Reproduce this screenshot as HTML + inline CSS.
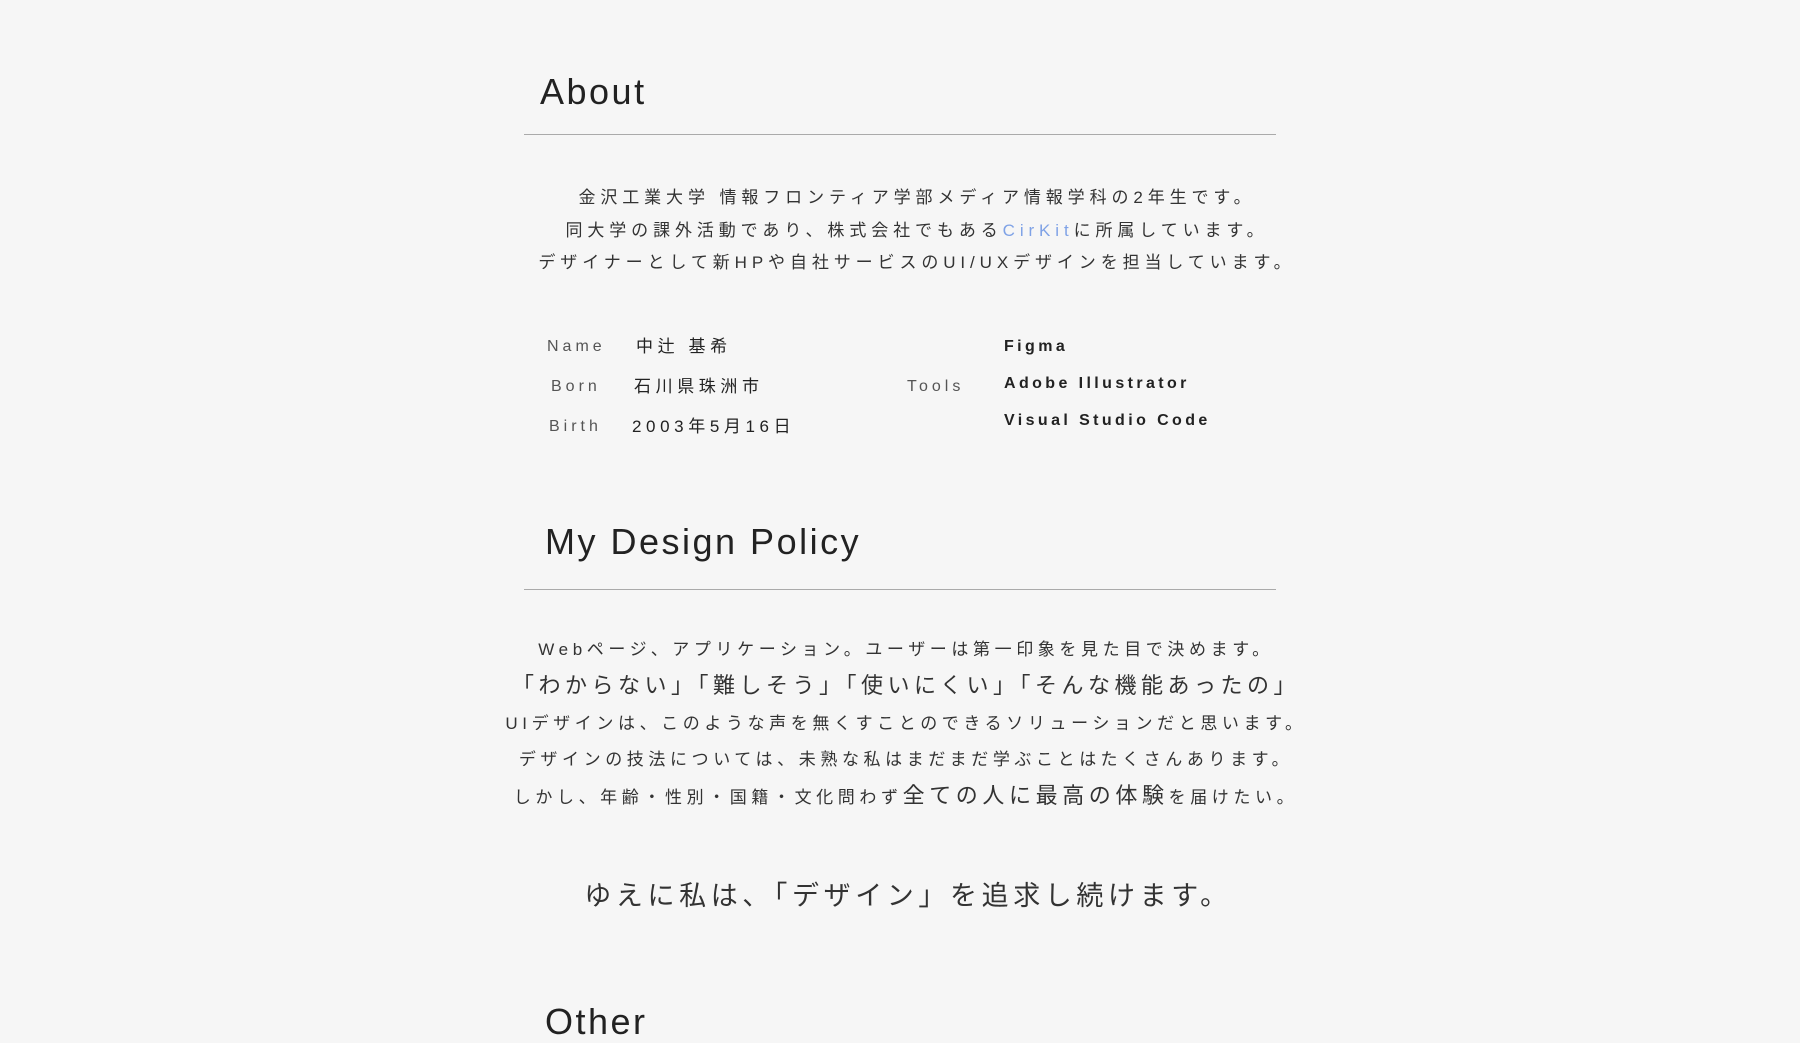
<!DOCTYPE html>
<html><head><meta charset="utf-8"><style>
html,body{margin:0;padding:0;background:#f6f6f6;}
body{width:1800px;height:1039px;position:relative;overflow:hidden;font-family:"Liberation Sans","Noto Sans CJK JP",sans-serif;color:#333;}
.a{position:absolute;white-space:nowrap;}
.h{font-size:36px;letter-spacing:2.5px;color:#222;font-weight:300;}
.line{position:absolute;left:524px;width:752px;height:1px;background:#aaa;}
.c{position:absolute;left:0;width:1800px;text-align:center;white-space:nowrap;font-size:17px;letter-spacing:4.6px;line-height:1;}
.ab{left:17px;letter-spacing:4.9px;}
.po{left:6px;}
.lab{font-size:16px;letter-spacing:4px;color:#555;}
.val{font-size:17px;letter-spacing:4.6px;color:#222;}
.tool{font-size:16px;letter-spacing:3.4px;font-weight:bold;color:#222;}
</style></head><body>
<div class="a h" style="left:540px;top:71px;">About</div>
<div class="line" style="top:134px;"></div>
<div class="c ab" style="top:189px;">金沢工業大学 情報フロンティア学部メディア情報学科の2年生です。</div>
<div class="c ab" style="top:222px;">同大学の課外活動であり、株式会社でもある<span style="color:#7fa2e6">CirKit</span>に所属しています。</div>
<div class="c ab" style="top:254px;">デザイナーとして新HPや自社サービスのUI/UXデザインを担当しています。</div>

<div class="a lab" style="left:547px;top:338px;">Name</div>
<div class="a lab" style="left:551px;top:378px;">Born</div>
<div class="a lab" style="left:549px;top:418px;">Birth</div>
<div class="a val" style="left:636px;top:332px;">中辻 基希</div>
<div class="a val" style="left:634px;top:372px;">石川県珠洲市</div>
<div class="a val" style="left:632px;top:412px;">2003年5月16日</div>
<div class="a lab" style="left:907px;top:378px;">Tools</div>
<div class="a tool" style="left:1004px;top:338px;">Figma</div>
<div class="a tool" style="left:1004px;top:375px;">Adobe Illustrator</div>
<div class="a tool" style="left:1004px;top:412px;">Visual Studio Code</div>

<div class="a h" style="left:545px;top:521px;">My Design Policy</div>
<div class="line" style="top:589px;"></div>
<div class="c po" style="top:641px;">Webページ、アプリケーション。ユーザーは第一印象を見た目で決めます。</div>
<div class="c po" style="top:675px;font-size:22px;letter-spacing:4.5px;">「わからない」「難しそう」「使いにくい」「そんな機能あったの」</div>
<div class="c po" style="top:715px;">UIデザインは、このような声を無くすことのできるソリューションだと思います。</div>
<div class="c po" style="top:751px;">デザインの技法については、未熟な私はまだまだ学ぶことはたくさんあります。</div>
<div class="c po" style="top:785px;">しかし、年齢・性別・国籍・文化問わず<span style="font-size:22px">全ての人に最高の体験</span>を届けたい。</div>
<div class="c" style="top:883px;left:8px;font-size:27px;letter-spacing:4.6px;">ゆえに私は、「デザイン」を追求し続けます。</div>
<div class="a h" style="left:545px;top:1001px;">Other</div>
</body></html>
